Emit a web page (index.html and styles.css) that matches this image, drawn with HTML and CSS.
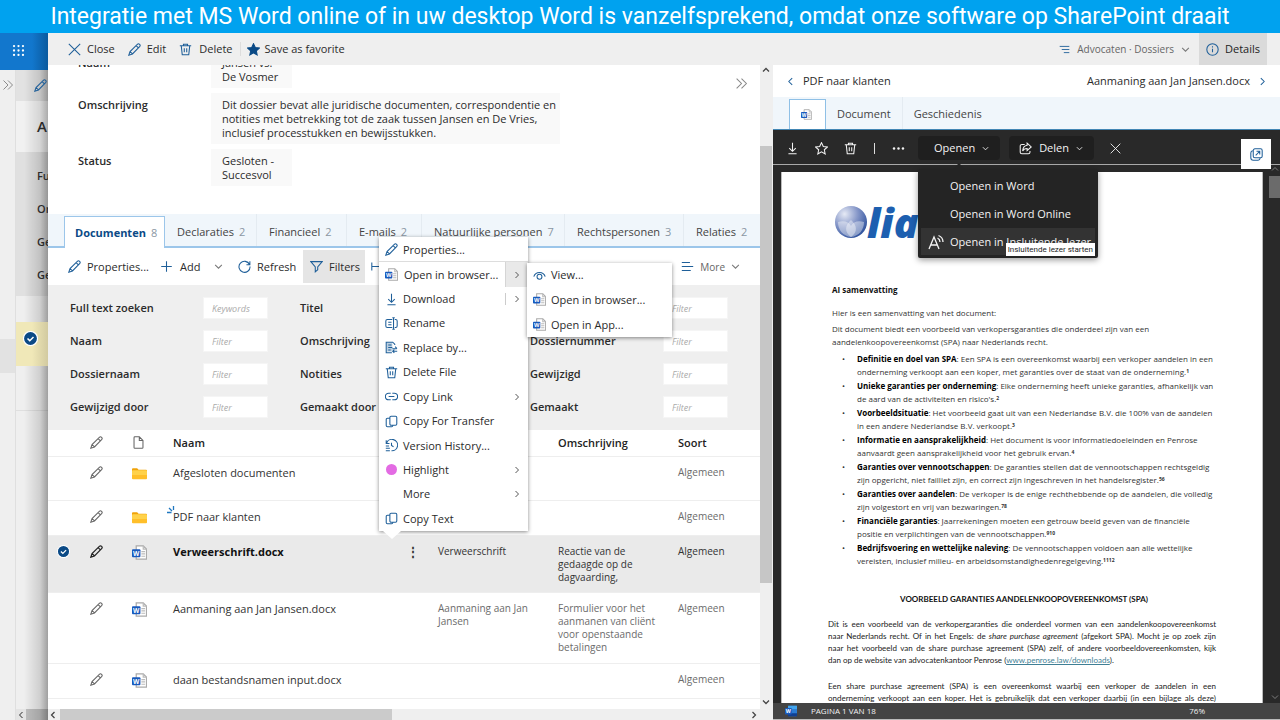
FILE: index.html
```html
<!DOCTYPE html>
<html lang="nl">
<head>
<meta charset="utf-8">
<title>Dossier – Jansen vs. De Vosmer</title>
<link rel="stylesheet" href="styles.css">
</head>
<body>
<svg class="defs" aria-hidden="true">
  <defs>
    <symbol id="pencil" viewBox="0 0 16 16"><path d="M1 15l1.500-4.500 9-8.800a1.800 1.800 0 0 1 2.800 2.800L5.500 13.500zM10 3.200l2.800 2.800M2.500 10.500l3 3"/></symbol>
    <symbol id="close" viewBox="0 0 16 16"><path d="M1 1l14 14M15 1L1 15"/></symbol>
    <symbol id="trash" viewBox="0 0 16 16"><path d="M1 3.500h14M5.500 3.500V1.500h5v2M2.800 3.500l1.200 11h8l1.200-11M6.500 6.500v5M9.500 6.500v5"/></symbol>
    <symbol id="star" viewBox="0 0 16 16"><path d="M8 .8l2.200 4.700 5.100.6-3.800 3.500 1 5.100L8 12.200l-4.500 2.500 1-5.100L.7 6.100l5.100-.6z"/></symbol>
    <symbol id="down" viewBox="0 0 16 16"><path d="M2 5l6 6 6-6"/></symbol>
    <symbol id="up" viewBox="0 0 16 16"><path d="M2 11l6-6 6 6"/></symbol>
    <symbol id="right" viewBox="0 0 16 16"><path d="M5 2l6 6-6 6"/></symbol>
    <symbol id="left" viewBox="0 0 16 16"><path d="M11 2L5 8l6 6"/></symbol>
    <symbol id="double" viewBox="0 0 16 16"><path d="M2 2l6 6-6 6M8 2l6 6-6 6"/></symbol>
    <symbol id="plus" viewBox="0 0 16 16"><path d="M8 1.500v13M1.500 8h13"/></symbol>
    <symbol id="refresh" viewBox="0 0 16 16"><path d="M14.200 5.600A6.800 6.800 0 1 0 14.800 8M14.600 1.600v4.200h-4.200"/></symbol>
    <symbol id="funnel" viewBox="0 0 16 16"><path d="M1 2h14L9.500 8.500V12l-3 2.500v-6z"/></symbol>
    <symbol id="lines" viewBox="0 0 16 16"><path d="M1 3h10M1 8h14M1 13h11"/></symbol>
    <symbol id="steps" viewBox="0 0 16 16"><path d="M1 3.500h14M4 8h11M7 12.500h8"/></symbol>
    <symbol id="info" viewBox="0 0 16 16"><circle cx="8" cy="8" r="7"/><path d="M8 7v4.500M8 4v1.500"/></symbol>
    <symbol id="download" viewBox="0 0 16 16"><path d="M8 1v10M4 7.500L8 11.500l4-4M3 14.500h10"/></symbol>
    <symbol id="rename" viewBox="0 0 16 16"><path d="M9 3H3a2 2 0 0 0-2 2v6a2 2 0 0 0 2 2h6M12 3h1a2 2 0 0 1 2 2v6a2 2 0 0 1-2 2h-1M10.500 1v14M9 1h3M9 15h3M4 6.500h4M4 9.500h4"/></symbol>
    <symbol id="replace" viewBox="0 0 16 16"><path d="M2 2h7v11H2z" fill="currentColor" fill-opacity=".3" stroke="none"/><path d="M12 5V4L9.500 1.500H1.500v13h7M4 5h4M4 8h5M4 11h3M9 9.500h5.500M12.500 7l2.200 2.400M15 12.500H9.500M11.500 10.500l-2 2 2 2"/></symbol>
    <symbol id="link" viewBox="0 0 16 16"><path d="M7 4H4.500a4 4 0 0 0 0 8H7M9 4h2.500a4 4 0 0 1 0 8H9M4.500 8h7"/></symbol>
    <symbol id="copy" viewBox="0 0 16 16"><rect x="6" y="1.500" width="8.500" height="11" rx="1.500"/><path d="M6 4H3a1.500 1.500 0 0 0-1.500 1.500V13a1.500 1.500 0 0 0 1.500 1.500h5a1.500 1.500 0 0 0 1.500-2"/></symbol>
    <symbol id="history" viewBox="0 0 16 16"><path d="M1.500 1.500v4h4M2 5a7 7 0 1 1 6 9.500M8 4.500V8l2.500 1.500M1 8.500h4M1 11.500h5M1 14.500h5"/></symbol>
    <symbol id="eye" viewBox="0 0 16 16"><path d="M1 9.500C3 2.500 13 2.500 15 9.500"/><circle cx="8" cy="9.500" r="3"/></symbol>
    <symbol id="page" viewBox="0 0 16 16"><path d="M3.500 1h5.500l4.500 4.500V14a1 1 0 0 1-1 1h-9a1 1 0 0 1-1-1V2a1 1 0 0 1 1-1zM9 1v4.500h4.500"/></symbol>
    <symbol id="share" viewBox="0 0 16 16"><path d="M7 3H3.500A2 2 0 0 0 1.500 5v7.500a2 2 0 0 0 2 2h8a2 2 0 0 0 2-2V11M10 1.500L15 6l-5 4.500V8C7 8 5.500 9 4.500 11 4.800 7 6.500 4.500 10 4z"/></symbol>
    <symbol id="popout" viewBox="0 0 16 16"><rect x="4" y="1" width="11" height="11" rx="2"/><path d="M3.500 3.500C2 3.700 1 4.500 1 6v6a3 3 0 0 0 3 3h6c1.500 0 2.300-1 2.500-2.500M7 9l5-5M8 4h4v4"/></symbol>
    <symbol id="reader" viewBox="0 0 16 16"><path d="M1 15L6 3l5 12M3 11h6M9.500 4a4.500 4.500 0 0 1 2.500 4M10.500 1.500A7 7 0 0 1 15 8"/></symbol>
    <symbol id="width" viewBox="0 0 16 16"><path d="M1 3v10M1 8h14"/></symbol>
    <symbol id="word" viewBox="0 0 16 16"><path d="M4.500 1h7.500l3.500 3.500V15h-11z" fill="#fff" stroke="#aaa"/><path d="M12 1v3.500h3.500M10 7h4M10 9.500h4M10 12h4" fill="none" stroke="#bbb"/><rect x="0" y="4.500" width="9" height="8.500" rx="1" fill="#185abd" stroke="none"/><text x="4.500" y="11.200" font-family="Open Sans" font-size="7" font-weight="700" text-anchor="middle" fill="#fff" stroke="none">W</text></symbol>
    <symbol id="wordapp" viewBox="0 0 16 16"><rect x="4" y="1" width="12" height="14" rx="1" fill="#2b7cd3" stroke="none"/><path d="M4 1h12v4.500H4z" fill="#41a5ee" stroke="none"/><path d="M4 11h12v4H4z" fill="#103f91" stroke="none"/><rect y="4" width="9" height="8.500" rx="1" fill="#185abd" stroke="none"/><text x="4.500" y="10.800" font-family="Open Sans" font-size="7" font-weight="700" text-anchor="middle" fill="#fff" stroke="none">W</text></symbol>
    <symbol id="folder" viewBox="0 0 16 16"><path d="M0 3.500a1 1 0 0 1 1-1h4.500L7 4h8a1 1 0 0 1 1 1v2H0z" fill="#f0a30a" stroke="none"/><rect x="0" y="4.500" width="16" height="9" rx="1" fill="#ffd24a" stroke="none"/><path d="M0 9.500h16v3.500a1 1 0 0 1-1 1H1a1 1 0 0 1-1-1z" fill="#ffbf2a" stroke="none"/></symbol>
    <symbol id="check" viewBox="0 0 16 16"><circle cx="8" cy="8" r="7.500" fill="#0b4a86" stroke="#fff"/><path d="M4.800 8l2.400 2.300 4-4" stroke="#fff" stroke-width="1.600"/></symbol>
  </defs>
</svg>

<h1 class="banner">Integratie met MS Word online of in uw desktop Word is vanzelfsprekend, omdat onze software op SharePoint draait</h1>

<div class="stage">
  <aside class="behind">
    <div class="suite"><svg viewBox="0 0 16 16"><circle cx="2.500" cy="2.500" r="1.400"/><circle cx="8" cy="2.500" r="1.400"/><circle cx="13.500" cy="2.500" r="1.400"/><circle cx="2.500" cy="8" r="1.400"/><circle cx="8" cy="8" r="1.400"/><circle cx="13.500" cy="8" r="1.400"/><circle cx="2.500" cy="13.500" r="1.400"/><circle cx="8" cy="13.500" r="1.400"/><circle cx="13.500" cy="13.500" r="1.400"/></svg></div>
    <div class="behind-body">
      <div class="rail"><svg class="ic grey"><use href="#double"/></svg><div class="rail-mark"></div></div>
      <div class="under">
        <div class="under-tools"><svg class="ic"><use href="#pencil"/></svg></div>
        <div class="under-title">A</div>
        <div class="under-filters"><b>Fu</b><b>Or</b><b>Ge</b><b>Ge</b></div>
        <div class="under-gap"></div>
        <div class="under-selected"><svg class="ic"><use href="#check"/></svg></div>
        <div class="under-row"></div>
        <div class="under-rest"></div>
        <div class="under-scroll"><span><svg><use href="#left"/></svg></span></div>
      </div>
    </div>
  </aside>

  <main class="dialog">
    <header class="bar">
      <button><svg class="ic"><use href="#close"/></svg>Close</button>
      <button><svg class="ic"><use href="#pencil"/></svg>Edit</button>
      <button class="split"><svg class="ic"><use href="#trash"/></svg>Delete</button>
      <button class="split fav"><svg class="ic solid"><use href="#star"/></svg>Save as favorite</button>
      <button class="site"><svg class="sm"><use href="#steps"/></svg>Advocaten · Dossiers<svg class="xs"><use href="#down"/></svg></button>
      <button class="details"><svg class="ic"><use href="#info"/></svg>Details</button>
    </header>

    <div class="content">
      <section class="left">
        <div class="summary">
          <dl>
            <dt>Naam</dt><dd>Jansen vs.<br>De Vosmer</dd>
            <dt>Omschrijving</dt><dd class="wide">Dit dossier bevat alle juridische documenten, correspondentie en<br>notities met betrekking tot de zaak tussen Jansen en De Vries,<br>inclusief processtukken en bewijsstukken.</dd>
            <dt>Status</dt><dd>Gesloten -<br>Succesvol</dd>
          </dl>
          <button class="collapse" aria-label="Inklappen"><svg class="ic grey"><use href="#double"/></svg></button>
        </div>

        <nav class="tabs">
          <button class="tab active">Documenten <i>8</i></button>
          <button class="tab">Declaraties <i>2</i></button>
          <button class="tab">Financieel <i>2</i></button>
          <button class="tab">E-mails <i>2</i></button>
          <button class="tab">Natuurlijke personen <i>7</i></button>
          <button class="tab">Rechtspersonen <i>3</i></button>
          <button class="tab">Relaties <i>2</i></button>
        </nav>

        <div class="tools">
          <button class="props"><svg class="ic"><use href="#pencil"/></svg>Properties...</button>
          <button class="add"><svg class="ic"><use href="#plus"/></svg>Add</button>
          <button class="drop" aria-label="Meer"><svg class="xs"><use href="#down"/></svg></button>
          <button class="refresh"><svg class="ic"><use href="#refresh"/></svg>Refresh</button>
          <button class="filters-on"><svg class="ic"><use href="#funnel"/></svg>Filters</button>
          <button class="fit" aria-label="Breedte"><svg class="ic"><use href="#width"/></svg></button>
          <button class="more"><svg class="ic"><use href="#lines"/></svg>More<svg class="xs"><use href="#down"/></svg></button>
        </div>

        <form class="filters">
          <label for="f1">Full text zoeken</label><input id="f1" placeholder="Keywords">
          <label for="f2">Titel</label><input id="f2" placeholder="Filter">
          <label for="f3"></label><input id="f3" placeholder="Filter">
          <label for="f4">Naam</label><input id="f4" placeholder="Filter">
          <label for="f5">Omschrijving</label><input id="f5" placeholder="Filter">
          <label for="f6">Dossiernummer</label><input id="f6" placeholder="Filter">
          <label for="f7">Dossiernaam</label><input id="f7" placeholder="Filter">
          <label for="f8">Notities</label><input id="f8" placeholder="Filter">
          <label for="f9">Gewijzigd</label><input id="f9" placeholder="Filter">
          <label for="f10">Gewijzigd door</label><input id="f10" placeholder="Filter">
          <label for="f11">Gemaakt door</label><input id="f11" placeholder="Filter">
          <label for="f12">Gemaakt</label><input id="f12" placeholder="Filter">
        </form>

        <div class="list">
          <table>
            <colgroup><col class="c-check"><col class="c-edit"><col class="c-type"><col class="c-name"><col class="c-dots"><col class="c-title"><col class="c-desc"><col></colgroup>
            <thead><tr><th></th><th><svg class="ic dim"><use href="#pencil"/></svg></th><th><svg class="ic dim"><use href="#page"/></svg></th><th>Naam</th><th></th><th></th><th>Omschrijving</th><th>Soort</th></tr></thead>
            <tbody>
              <tr class="r-folder"><td></td><td><svg class="ic dim"><use href="#pencil"/></svg></td><td><svg class="ty"><use href="#folder"/></svg></td><td class="name">Afgesloten documenten</td><td></td><td></td><td></td><td>Algemeen</td></tr>
              <tr class="r-short"><td></td><td><svg class="ic dim"><use href="#pencil"/></svg></td><td><svg class="ty"><use href="#folder"/></svg></td><td class="name"><span class="fresh">PDF naar klanten<svg viewBox="0 0 8 8"><path d="M0 6.500h4.500M2 2l3 3M6.500 0v4"/></svg></span></td><td></td><td></td><td></td><td>Algemeen</td></tr>
              <tr class="r-on"><td><svg class="ic"><use href="#check"/></svg></td><td><svg class="ic dark"><use href="#pencil"/></svg></td><td><svg class="ty"><use href="#word"/></svg></td><td class="name">Verweerschrift.docx</td><td class="dots">⋮</td><td>Verweerschrift</td><td>Reactie van de<br>gedaagde op de<br>dagvaarding,</td><td>Algemeen</td></tr>
              <tr class="r-tall"><td></td><td><svg class="ic dim"><use href="#pencil"/></svg></td><td><svg class="ty"><use href="#word"/></svg></td><td class="name">Aanmaning aan Jan Jansen.docx</td><td></td><td>Aanmaning aan Jan<br>Jansen</td><td>Formulier voor het<br>aanmanen van cliënt<br>voor openstaande<br>betalingen</td><td>Algemeen</td></tr>
              <tr class="r-short"><td></td><td><svg class="ic dim"><use href="#pencil"/></svg></td><td><svg class="ty"><use href="#word"/></svg></td><td class="name">daan bestandsnamen input.docx</td><td></td><td></td><td></td><td>Algemeen</td></tr>
            </tbody>
          </table>
        </div>
      </section>
      <div class="vscroll"><svg><use href="#up"/></svg><div class="thumb"></div><svg class="end"><use href="#down"/></svg></div>
      <div class="hscroll"><span><svg><use href="#left"/></svg></span><div class="thumb"></div><svg class="end"><use href="#right"/></svg></div>

      <section class="right">
        <div class="pager"><button><svg class="xs"><use href="#left"/></svg>PDF naar klanten</button><button>Aanmaning aan Jan Jansen.docx<svg class="xs"><use href="#right"/></svg></button></div>
        <nav class="rtabs"><button class="on" aria-label="Voorbeeld"><svg class="sm"><use href="#word"/></svg></button><button>Document</button><button>Geschiedenis</button></nav>
        <div class="viewer">
          <div class="vtools">
            <button aria-label="Downloaden"><svg class="ic"><use href="#download"/></svg></button>
            <button aria-label="Favoriet"><svg class="ic"><use href="#star"/></svg></button>
            <button aria-label="Verwijderen"><svg class="ic"><use href="#trash"/></svg></button>
            <span class="pipe"></span>
            <button class="dots3" aria-label="Meer"><svg class="ic" viewBox="0 0 16 16"><circle cx="2.500" cy="8" r="1.500"/><circle cx="8" cy="8" r="1.500"/><circle cx="13.500" cy="8" r="1.500"/></svg></button>
            <button class="pill open">Openen<svg class="tiny"><use href="#down"/></svg></button>
            <button class="pill"><svg class="ic"><use href="#share"/></svg>Delen<svg class="tiny"><use href="#down"/></svg></button>
            <button class="vclose" aria-label="Sluiten"><svg class="sm"><use href="#close"/></svg></button>
          </div>
          <div class="canvas">
            <article class="paper">
              <div class="logo">
                <svg viewBox="0 0 32 32"><defs><radialGradient id="g" cx=".3" cy=".25" r=".9"><stop offset="0" stop-color="#e6eaf5"/><stop offset=".45" stop-color="#8798c9"/><stop offset="1" stop-color="#1c4394"/></radialGradient></defs><circle class="globe" cx="16" cy="16" r="16"/><path class="petal" d="M3 16c6-2 11 0 13 4 2-4 7-6 13-4 0 8-5 14-13 15C8 30 3 24 3 16z"/><path class="petal" d="M16 14c6 5 7 12 0 17-7-5-6-12 0-17z"/></svg><span>lial</span>
              </div>
              <h2>AI samenvatting</h2>
              <p class="intro">Hier is een samenvatting van het document:</p>
              <p class="lead">Dit document biedt een voorbeeld van verkopersgaranties die onderdeel zijn van een<br>aandelenkoopovereenkomst (SPA) naar Nederlands recht.</p>
              <ul>
                <li><b>Definitie en doel van SPA</b>: Een SPA is een overeenkomst waarbij een verkoper aandelen in een<br>onderneming verkoopt aan een koper, met garanties over de staat van de onderneming.<sup>1</sup></li>
                <li><b>Unieke garanties per onderneming</b>: Elke onderneming heeft unieke garanties, afhankelijk van<br>de aard van de activiteiten en risico's.<sup>2</sup></li>
                <li><b>Voorbeeldsituatie</b>: Het voorbeeld gaat uit van een Nederlandse B.V. die 100% van de aandelen<br>in een andere Nederlandse B.V. verkoopt.<sup>3</sup></li>
                <li><b>Informatie en aansprakelijkheid</b>: Het document is voor informatiedoeleinden en Penrose<br>aanvaardt geen aansprakelijkheid voor het gebruik ervan.<sup>4</sup></li>
                <li><b>Garanties over vennootschappen</b>: De garanties stellen dat de vennootschappen rechtsgeldig<br>zijn opgericht, niet failliet zijn, en correct zijn ingeschreven in het handelsregister.<sup>56</sup></li>
                <li><b>Garanties over aandelen</b>: De verkoper is de enige rechthebbende op de aandelen, die volledig<br>zijn volgestort en vrij van bezwaringen.<sup>78</sup></li>
                <li><b>Financiële garanties</b>: Jaarrekeningen moeten een getrouw beeld geven van de financiële<br>positie en verplichtingen van de vennootschappen.<sup>910</sup></li>
                <li><b>Bedrijfsvoering en wettelijke naleving</b>: De vennootschappen voldoen aan alle wettelijke<br>vereisten, inclusief milieu- en arbeidsomstandighedenregelgeving.<sup>1112</sup></li>
              </ul>
              <h3>VOORBEELD GARANTIES AANDELENKOOPOVEREENKOMST (SPA)</h3>
              <p class="just"><span>Dit is een voorbeeld van de verkopergaranties die onderdeel vormen van een aandelenkoopovereenkomst</span><span>naar Nederlands recht. Of in het Engels: de <em>share purchase agreement</em> (afgekort SPA). Mocht je op zoek zijn</span><span>naar het voorbeeld van de share purchase agreement (SPA) zelf, of andere voorbeeldovereenkomsten, kijk</span><span class="tail">dan op de website van advocatenkantoor Penrose (<a href="#">www.penrose.law/downloads</a>).</span></p>
              <p class="just"><span>Een share purchase agreement (SPA) is een overeenkomst waarbij een verkoper de aandelen in een</span><span>onderneming verkoopt aan een koper. Het is gebruikelijk dat een verkoper daarbij (in een bijlage als deze)</span></p>
            </article>
            <div class="dscroll"><svg><use href="#up"/></svg><div class="thumb"></div><svg class="end"><use href="#down"/></svg></div>
          </div>
          <footer class="status"><svg class="app"><use href="#wordapp"/></svg><span>PAGINA 1 VAN 18</span><span class="zoom">76%</span></footer>
          <button class="popout" aria-label="Openen in nieuw venster"><svg class="ic"><use href="#popout"/></svg></button>
          <div class="openmenu">
            <button>Openen in Word</button>
            <button>Openen in Word Online</button>
            <button class="hot"><svg><use href="#reader"/></svg>Openen in Insluitende lezer</button>
            <div class="tip" role="tooltip">Insluitende lezer starten</div>
          </div>
        </div>
      </section>
    </div>

    <div class="menu">
      <button class="first"><svg class="ic"><use href="#pencil"/></svg>Properties...</button>
      <button class="cur"><svg class="ic"><use href="#word"/></svg>Open in browser...<span class="arr"><svg><use href="#right"/></svg></span></button>
      <button><svg class="ic"><use href="#download"/></svg>Download<span class="arr cut"><svg><use href="#right"/></svg></span></button>
      <button><svg class="ic"><use href="#rename"/></svg>Rename</button>
      <button><svg class="ic"><use href="#replace"/></svg>Replace by...</button>
      <button><svg class="ic"><use href="#trash"/></svg>Delete File</button>
      <button><svg class="ic"><use href="#link"/></svg>Copy Link<span class="arr"><svg><use href="#right"/></svg></span></button>
      <button><svg class="ic"><use href="#copy"/></svg>Copy For Transfer</button>
      <button><svg class="ic"><use href="#history"/></svg>Version History...</button>
      <button><span class="dot"></span>Highlight<span class="arr"><svg><use href="#right"/></svg></span></button>
      <button><span class="blank"></span>More<span class="arr"><svg><use href="#right"/></svg></span></button>
      <button><svg class="ic"><use href="#copy"/></svg>Copy Text</button>
    </div>
    <div class="submenu">
      <button><svg class="ic"><use href="#eye"/></svg>View...</button>
      <button><svg class="ic"><use href="#word"/></svg>Open in browser...</button>
      <button><svg class="ic"><use href="#word"/></svg>Open in App...</button>
    </div>
  </main>
</div>
</body>
</html>
```
FILE: styles.css
```css
* { box-sizing: border-box; }
body { margin: 0; height: 100vh; display: flex; flex-direction: column; overflow: hidden; font: 11px/14px "Open Sans", "Noto Sans", sans-serif; color: #2b2b2b; background: #fff; }
button { border: 0; padding: 0; margin: 0; background: none; font: inherit; color: inherit; display: flex; align-items: center; white-space: nowrap; }
svg { fill: none; stroke: currentColor; stroke-width: 1.3; flex: none; display: block; width: 8px; height: 8px; }
.defs { position: absolute; width: 0; height: 0; }
.ic { width: 13px; height: 13px; color: #1f5f99; }
.sm { width: 11px; height: 11px; color: #1f5f99; }
.xs { width: 9px; height: 9px; stroke-width: 1.8; color: #777; }
.tiny { width: 7px; height: 7px; stroke-width: 2; }
.grey { color: #888; }
.dim { color: #666; }
.dark { color: #222; stroke-width: 1.5; }
.solid { fill: #0b4a86; color: #0b4a86; }

.banner { margin: 0; height: 33px; flex: none; background: #00a2ef; color: #fff; font: 400 23px/33px Roboto, "Open Sans", sans-serif; text-align: center; white-space: nowrap; }
.stage { flex: 1; min-height: 0; display: flex; }

.behind { width: 48px; flex: none; display: flex; flex-direction: column; background: linear-gradient(90deg, transparent 24px, #0002 40px, #0005), #efefef; }
.suite { height: 37px; flex: none; background: linear-gradient(90deg, #1277cd 32px, #0b5a9e); padding: 11px 12px; }
.suite svg { width: 13px; height: 13px; stroke: none; fill: #fff; }
.behind-body { flex: 1; display: flex; min-height: 0; }
.rail { width: 16px; border-right: 1px solid #0001; padding: 9px 2px 0; }
.rail .ic { width: 12px; height: 12px; }
.rail-mark { height: 34px; margin: 248px -2px 0; background: #0000000d; }
.under { flex: 1; display: flex; flex-direction: column; overflow: hidden; }
.under > div { flex: none; }
.under-tools { height: 31px; background: #0000000d; padding: 9px 0 0 18px; }
.under-title { height: 51px; background: #ffffff20; padding: 0 0 0 21px; font: 600 15px/51px "Open Sans", sans-serif; }
.under-filters { height: 144px; background: #0000000f; padding: 7px 0 0 21px; }
.under-filters b { display: block; height: 33px; line-height: 33px; font-weight: 600; }
.under-gap { height: 26px; }
.under-selected { height: 44px; background: linear-gradient(90deg, #f0e8b8 16px, #d2caa0); padding: 9px 7px; }
.under-selected .ic { width: 15px; height: 15px; }
.under-row { height: 45px; border-bottom: 1px solid #0001; }
.under .under-rest { flex: 1; }
.under-scroll { height: 11px; background: #0003; }
.under-scroll span { display: block; width: 10px; height: 11px; padding: 2px 1px; background: #e4e4e4; }
.under-scroll svg { stroke-width: 2; }

.dialog { flex: 1; min-width: 0; display: flex; flex-direction: column; position: relative; background: #fff; }
.bar { height: 32px; flex: none; display: flex; align-items: center; background: #efefef; padding: 0 13px 0 20px; }
.bar button { gap: 6px; margin-right: 13px; }
.bar .split { gap: 7px; padding-right: 7px; border-right: 1px solid #ddd; margin-right: 6px; }
.bar .fav { border: 0; gap: 5px; }
.bar button.site { margin: 0 9px 0 auto; font-size: 10px; color: #666; gap: 7px; }
.bar button.details { height: 32px; margin: 0; padding: 0 7px; background: #dadada; color: #222; }

.content { flex: 1; min-height: 0; display: grid; grid-template: minmax(0, 1fr) 11px / minmax(0, 712px) 13px minmax(0, 1fr); }
.left { display: flex; flex-direction: column; overflow: hidden; min-height: 0; }
.summary { height: 149px; flex: none; display: flex; align-items: flex-end; overflow: hidden; padding: 0 0 28px 30px; position: relative; }
.summary dl { margin: 0; display: grid; grid-template-columns: 133px 349px; row-gap: 5px; flex: none; }
.summary dt { padding-top: 5px; font-weight: 600; }
.summary dd { margin: 0; width: 81px; padding: 5px 0 4px 11px; background: #f9f9f9; white-space: nowrap; }
.summary dd.wide { width: auto; }
.collapse { position: absolute; right: 12px; top: 12px; }

.tabs { height: 34px; flex: none; display: grid; grid-template-columns: 101px 92px 90px 75px 143px 119px minmax(0, 1fr); padding-left: 16px; background: #f0f6fb; border-bottom: 2px solid #9cc6ea; }
.tab { padding: 4px 0 0 12px; gap: 5px; border-right: 1px solid #e4ebf1; color: #444; }
.tab:last-child { border: 0; }
.tab i { font-style: normal; color: #8b97a3; }
.tab.active { margin: 2px 0 -2px; padding: 0 0 0 10px; background: #fff; border: 2px solid #9cc6ea; border-width: 1px 1px 0; font-weight: 700; color: #0b4a86; }
.tab.active i { font-weight: 400; }
.tools { height: 37px; flex: none; display: flex; align-items: center; padding-left: 20px; }
.tools button { gap: 6px; height: 33px; }
.tools .props { width: 92px; }
.tools .add { width: 46px; gap: 7px; }
.tools .drop { width: 32px; padding-left: 8px; }
.tools .refresh { width: 65px; }
.tools .filters-on { width: 62px; padding-left: 7px; background: #e5e5e5; }
.tools .fit { margin-left: 6px; }
.tools .more { margin: 0 20px 0 auto; color: #666; font-size: 10px; }

.filters { height: 145px; flex: none; display: grid; grid-template-columns: repeat(3, 133px 97px); grid-auto-rows: 22px; row-gap: 11px; padding: 12px 0 0 22px; background: #efefef; align-items: center; font-weight: 600; }
.filters input { width: 65px; height: 22px; border: 1px solid #f5f5f5; background: #fff; padding: 0 8px; font: italic 9px "Open Sans", sans-serif; }
.filters input::placeholder { color: #aaa; opacity: 1; }

.list { flex: 1; min-height: 0; overflow: hidden; }
table { width: 100%; border-collapse: collapse; table-layout: fixed; color: #6b6b6b; font-size: 10px; line-height: 13px; }
.c-check { width: 32px; } .c-edit { width: 52px; } .c-type { width: 41px; } .c-name { width: 225px; } .c-dots { width: 40px; } .c-title { width: 120px; } .c-desc { width: 120px; }
th, td { text-align: left; vertical-align: top; padding: 9px 0 0; white-space: nowrap; border-bottom: 1px solid #eee; }
th { height: 26px; padding-top: 6px; font-size: 11px; font-weight: 600; color: #222; }
td:first-child { padding-left: 9px; }
th:nth-child(2), td:nth-child(2) { padding-left: 10px; }
.ty { width: 15px; height: 15px; }
.name { font-size: 11px; color: #333; }
.r-folder { height: 44px; } .r-short { height: 35px; } .r-on { height: 57px; } .r-tall { height: 71px; }
.r-on { background: #eaeaea; color: #333; }
.r-on .name { font-weight: 700; color: #111; }
.dots { font-size: 12px; font-weight: 700; color: #333; padding-left: 9px; }
.fresh { position: relative; }
.fresh svg { position: absolute; left: -6px; top: -3px; color: #1f77c0; }

.vscroll { grid-row: 1 / 3; grid-column: 2; background: #efefef; display: flex; flex-direction: column; align-items: center; padding: 1px 1px 14px 0; }
.vscroll svg, .hscroll svg { stroke-width: 2.5; color: #444; }
.vscroll .thumb { width: 100%; height: 437px; margin-top: 72px; background: #c6c6c6; }
svg.end { margin-top: auto; }
.hscroll { grid-row: 2; grid-column: 1; background: #efefef; display: flex; align-items: center; }
.hscroll span { width: 12px; padding-left: 1px; }
.hscroll .thumb { width: 332px; height: 11px; background: #cbcbcb; }
.hscroll svg.end { margin: 0 2px 0 auto; }

.right { grid-row: 1 / 3; grid-column: 3; display: flex; flex-direction: column; min-height: 0; }
.pager { height: 32px; flex: none; display: flex; justify-content: space-between; padding: 0 13px; }
.pager button { gap: 8px; }
.pager svg { color: #1f5f99; }
.rtabs { height: 33px; flex: none; display: flex; background: #f0f6fb; border-bottom: 1px solid #4286b4; padding-left: 16px; color: #444; }
.rtabs button { padding: 2px 11px 0; border-right: 1px solid #e4ebf1; }
.rtabs button:last-child { border: 0; }
.rtabs .on { width: 37px; margin-top: 2px; padding-top: 0; background: #fff; border: 1px solid #8fc0e6; border-bottom: 0; }
.viewer { flex: 1; min-height: 0; display: flex; flex-direction: column; position: relative; background: #292929; color: #f3f3f3; }
.viewer .ic, .viewer .sm { color: inherit; }
.vtools { height: 35px; flex: none; display: flex; align-items: center; padding: 2px 13px 0; gap: 16px; border-bottom: 1px solid #a9a9a9; }
.pipe { width: 1px; height: 11px; background: #ddd; margin-left: 1px; }
.dots3 { margin-left: 1px; }
.dots3 svg { fill: currentColor; stroke: none; }
.pill { height: 24px; border-radius: 4px; background: #1f1f1f; padding: 0 11px 0 10px; gap: 7px; margin: 0 -7px 0 0; }
.pill.open { padding: 0 11px 0 16px; margin-left: -3px; }
.vclose { margin-left: 7px; }
.canvas { flex: 1; min-height: 0; display: flex; justify-content: space-between; padding: 7px 0 0 8px; overflow: hidden; }
.paper { flex: none; width: calc(100% - 17px); overflow: hidden; background: #fff; color: #333; padding: 30px 46px 0 50px; border: 1px solid #bbb; border-width: 0 1px; font-size: 8px; line-height: 13px; white-space: nowrap; }
.logo { display: flex; align-items: center; height: 40px; padding-left: 3px; }
.logo svg { width: 32px; height: 32px; stroke: none; }
.globe { fill: url(#g); }
.petal { fill: #fff; opacity: .4; }
.logo span { font: italic 800 41px/40px "Open Sans", sans-serif; color: #1d5fb0; }
h2, h3 { font-size: 8px; line-height: 13px; margin: 0; font-weight: 700; color: #111; }
h2 { margin-top: 41px; }
.intro { margin: 10px 0 3px; }
.lead { margin: 0 0 4px; }
.paper ul { margin: 0; padding: 0 0 0 25px; list-style: none; }
.paper li { margin-bottom: 1px; position: relative; }
.paper li::before { content: "•"; position: absolute; left: -15px; }
.paper b { color: #000; }
sup { font-size: 5px; line-height: 0; font-weight: 700; vertical-align: 2px; }
h3 { text-align: center; margin: 26px 0 12px; font-family: Lato, sans-serif; }
.just { margin: 0 0 12px -4px; font-family: Lato, sans-serif; line-height: 12px; color: #222; }
.just + .just { margin-top: 14px; }
.just span { display: block; text-align: justify; text-align-last: justify; white-space: normal; }
.just .tail { text-align-last: left; }
.just a { color: #3f7f95; }
.dscroll { width: 11px; display: flex; flex-direction: column; align-items: center; color: #aaa; margin-top: -7px; padding-bottom: 2px; }
.dscroll .thumb { width: 11px; height: 22px; margin-top: 3px; background: #6b6b6b; }
.status { height: 17px; flex: none; display: flex; align-items: center; background: #444; border-bottom: 1px solid #bbb; font-size: 8px; padding: 0 75px 0 12px; gap: 14px; }
.status .app { width: 12px; height: 12px; }
.zoom { margin-left: auto; }
.popout { position: absolute; right: 9px; top: 9px; width: 30px; height: 30px; background: #fff; justify-content: center; }
.viewer .popout .ic { color: #1f5f99; }
.openmenu { position: absolute; left: 145px; top: 39px; width: 180px; background: #242424; padding: 3px; border-radius: 2px; box-shadow: 0 2px 6px #0006; }
.openmenu::before { content: ""; position: absolute; left: 34px; top: -6px; border: 7px solid transparent; border-top: 0; border-bottom-color: #242424; }
.openmenu button { width: 100%; height: 28px; padding-left: 29px; }
.openmenu button.hot { background: #333; padding-left: 7px; gap: 6px; height: 27px; }
.hot svg { width: 16px; height: 16px; }
.tip { position: absolute; right: 3px; bottom: 2px; height: 13px; padding: 0 2px; background: #fff; color: #222; font: 8px/13px Roboto, sans-serif; white-space: nowrap; }

.menu, .submenu { position: absolute; background: #fff; box-shadow: 0 1px 4px #0007; display: grid; grid-auto-rows: 1fr; }
.menu { left: 331px; top: 204px; width: 149px; height: 294px; padding: 1px 0 0; }
.menu::after { content: ""; position: absolute; left: 4px; bottom: -8px; border: 9px solid transparent; border-width: 8px 9px 0; border-top-color: #fff; }
.menu button, .submenu button { padding-left: 6px; gap: 5px; }
.menu .first { border-bottom: 1px solid #ddd; }
.menu .cur { gap: 6px; }
.arr { margin-left: auto; width: 23px; height: 100%; display: flex; align-items: center; justify-content: center; color: #555; }
.arr svg { stroke-width: 2; }
.cur .arr { background: #e9e9e9; border-left: 1px solid #d5d5d5; }
.cut { background: linear-gradient(#ccc, #ccc) 0 50% / 1px 12px no-repeat; }
.dot { width: 11px; height: 11px; margin: 0 1px; border-radius: 50%; background: #e36be3; }
.blank { width: 13px; }
.submenu { left: 479px; top: 230px; width: 145px; height: 74px; }
```
